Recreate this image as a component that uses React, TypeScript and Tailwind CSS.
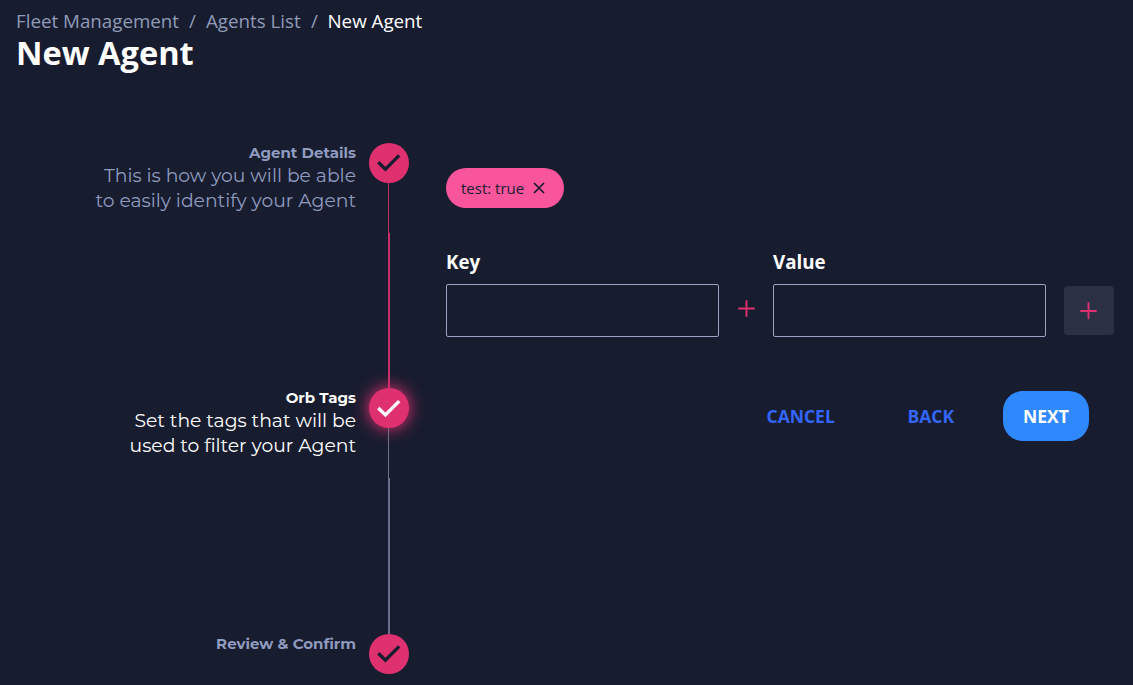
import React from "react";

function Check({ active = false }: { active?: boolean }) {
  return (
    <div
      className={
        "flex size-10 shrink-0 items-center justify-center rounded-full bg-[#df316f] " +
        (active ? "text-white shadow-[0_0_16px_1px_#df316f]" : "text-[#181c2f]")
      }
    >
      <svg width="40" height="40" viewBox="0 0 40 40" fill="none" stroke="currentColor" strokeWidth="3.4">
        <path d={active ? "M9.3 20 16.4 26.9 30.2 13.1" : "M9.3 19.3 16.4 26.2 30.2 12.4"} strokeLinejoin="miter" />
      </svg>
    </div>
  );
}

function Plus({ boxed = false }: { boxed?: boolean }) {
  return (
    <svg width="18" height="18" viewBox="0 0 18 18" fill="none" stroke="#df316f" strokeWidth="1.9" strokeLinecap="round">
      <path d={boxed ? "M8.5 1.3v15M1 9h15" : "M9.5 1v15M2 8.5h15"} />
    </svg>
  );
}

function Connector({ done = false, height }: { done?: boolean; height: string }) {
  return (
    <div className={"flex flex-col pl-[19px] " + height}>
      <div className={"h-[50px] w-px " + (done ? "bg-[#c02d65]" : "bg-[#6b6f8c]")} />
      <div className={"w-0.5 flex-1 " + (done ? "bg-[#c82e68]" : "bg-[#6b6f8c]")} />
    </div>
  );
}

export default function App() {
  return (
    <div className="h-[685px] w-[1133px] overflow-hidden bg-[#181c2f] font-['Open_Sans',sans-serif] text-white">
      <header className="h-[143px] pl-4 pt-[7px]">
        <nav className="flex h-[27px] items-center whitespace-pre text-[18.75px] leading-[27px] text-[#8f9bb8]">
          <span className="w-[173px]">Fleet Management</span>
          <span className="w-[17px]">/</span>
          <span className="w-[105px]">Agents List</span>
          <span className="w-[16.5px]">/</span>
          <span className="text-white">New Agent</span>
        </nav>
        <h1 className="mt-px text-[32.6px] font-bold leading-[36px]">New Agent</h1>
      </header>
      <main className="flex h-[542px]">
        <section className="flex w-[356px] shrink-0 flex-col items-end whitespace-nowrap text-right font-[Montserrat,sans-serif] text-[18.75px] leading-[25px] text-[#8f9bbf]">
          <div className="h-[245px]">
            <h2 className="h-5 text-[15px] font-bold leading-5">Agent Details</h2>
            <p>This is how you will be able</p>
            <p>to easily identify your Agent</p>
          </div>
          <div className="h-[246px] text-white">
            <h2 className="h-5 text-[15px] font-bold leading-5">Orb Tags</h2>
            <p>Set the tags that will be</p>
            <p>used to filter your Agent</p>
          </div>
          <h2 className="text-[15px] font-bold leading-5">Review &amp; Confirm</h2>
        </section>
        <div className="ml-[13px] flex h-[531px] w-10 shrink-0 flex-col">
          <Check />
          <Connector done height="h-[205px]" />
          <Check active />
          <Connector height="h-[206px]" />
          <Check />
        </div>
        <section className="ml-[37px] w-[668px] pt-[25px]">
          <div className="flex h-10 w-[118px] items-center rounded-[20px] bg-[#f9559d] pl-[15px] text-[15px] text-[#181c2f]">
            <span className="w-[72px]">test: true</span>
            <svg width="12" height="12" viewBox="0 0 12 12" fill="none" stroke="currentColor" strokeWidth="1.7">
              <path d="m1 1 10 10M11 1 1 11" />
            </svg>
          </div>
          <div className="mt-5 w-[655px] border-t border-[#1a1b2e]" />
          <div className="flex pt-5">
            <label className="w-[273px] text-[18.75px] font-bold leading-[25px]">
              Key
              <input className="mt-2.5 block h-[53px] w-full rounded-[2px] border border-[#9ba4c4] bg-transparent outline-none" />
            </label>
            <div className="flex w-[54px] justify-center pt-[51px]"><Plus /></div>
            <label className="w-[273px] text-[18.75px] font-bold leading-[25px]">
              Value
              <input className="mt-2.5 block h-[53px] w-full rounded-[2px] border border-[#9ba4c4] bg-transparent outline-none" />
            </label>
            <button aria-label="Add tag" className="ml-[18px] mt-[37px] flex h-[49px] w-[50px] items-center justify-center rounded-[4px] bg-[#2b3045]">
              <Plus boxed />
            </button>
          </div>
          <div className="mt-5 w-[655px] border-t border-[#1a1b2e]" />
          <div className="mt-[33px] flex h-[50px] items-center text-[17.5px] font-bold text-[#3366ff]">
            <button className="ml-[320.5px] w-[141px] text-left">CANCEL</button>
            <button className="w-[95.5px] text-left">BACK</button>
            <button className="h-[50px] w-[86px] rounded-[20px] bg-[#3089fc] text-white">NEXT</button>
          </div>
        </section>
      </main>
    </div>
  );
}
